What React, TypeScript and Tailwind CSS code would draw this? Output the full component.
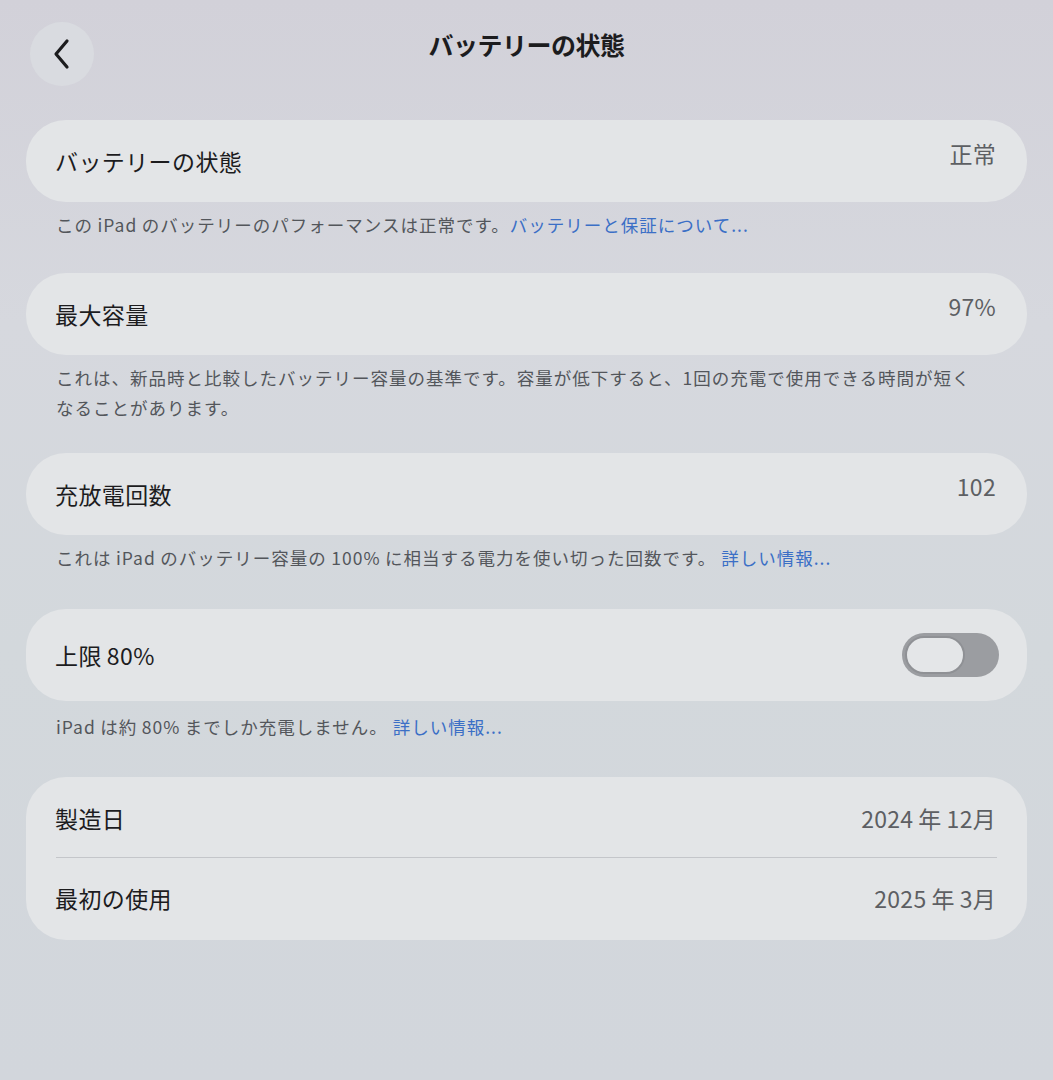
import React from 'react';

const font = { fontFamily: '"Noto Sans CJK JP", "Noto Sans", sans-serif' };

const Card: React.FC<{ className?: string; children: React.ReactNode }> = ({ className = '', children }) => (
  <div className={`mx-[26px] rounded-[40px] bg-[#e3e5e7] ${className}`}>{children}</div>
);

const Row: React.FC<{ label: string; value?: React.ReactNode; h?: string }> = ({ label, value, h = 'h-[82px]' }) => (
  <div className={`flex items-center justify-between pl-[29px] pr-[31px] ${h}`}>
    <span className="text-[23px] text-[#1c1c1e] tracking-[0.4px]">{label}</span>
    {value}
  </div>
);

const Value: React.FC<{ children: React.ReactNode; up?: boolean }> = ({ children, up = true }) => (
  <span className={`text-[23px] text-[#5d5f63] tracking-[0.3px] ${up ? '-mt-[16px]' : ''}`}>{children}</span>
);

const Note: React.FC<{ children: React.ReactNode; className?: string }> = ({ children, className = '' }) => (
  <p className={`pl-[56px] pr-[30px] text-[17.5px] leading-[30px] text-[#53565b] tracking-[1px] ${className}`}>{children}</p>
);

const Link: React.FC<{ children: React.ReactNode }> = ({ children }) => (
  <span className="text-[#3b6fc6]">{children}</span>
);

const Toggle: React.FC = () => (
  <div className="mr-[-3px] flex h-[44px] w-[97px] items-center rounded-full bg-[#9b9da1] p-[3px]">
    <div className="h-[38px] w-[60px] rounded-full border-2 border-[#8f9195] bg-[#e4e6e8]" />
  </div>
);

export default function App() {
  return (
    <div
      className="h-[1080px] w-[1053px] overflow-hidden bg-[linear-gradient(180deg,#d2d1d9_0%,#d6d8de_30%,#d3d8dc_60%,#d2d6dc_100%)]"
      style={font}
    >
      <header className="relative flex h-[112px] items-start justify-center pt-[26px]">
        <button className="absolute left-[30px] top-[22px] flex h-[64px] w-[64px] items-center justify-center rounded-full bg-[#d9dbe0]">
          <svg width="22" height="32" viewBox="0 0 22 32" fill="none">
            <path d="M16 3 L5 16 L16 29" stroke="#1c1c1e" strokeWidth="3.2" strokeLinecap="round" strokeLinejoin="round" />
          </svg>
        </button>
        <h1 className="text-[25px] font-semibold text-[#1c1c1e] tracking-[-0.5px]">バッテリーの状態</h1>
      </header>

      <div className="mt-[8px]">
        <Card>
          <Row label="バッテリーの状態" value={<Value>正常</Value>} />
        </Card>
        <Note className="mt-[8px]">
          この{'\u2009'}iPad{'\u2009'}のバッテリーのパフォーマンスは正常です。<Link>バッテリーと保証について...</Link>
        </Note>
      </div>

      <div className="mt-[33px]">
        <Card>
          <Row label="最大容量" value={<Value>97%</Value>} />
        </Card>
        <Note className="mt-[8px]">
          これは、新品時と比較したバッテリー容量の基準です。容量が低下すると、1回の充電で使用できる時間が短く
          <br />
          なることがあります。
        </Note>
      </div>

      <div className="mt-[30px]">
        <Card>
          <Row label="充放電回数" value={<Value>102</Value>} />
        </Card>
        <Note className="mt-[8px]">
          これは{'\u2009'}iPad{'\u2009'}のバッテリー容量の{'\u2009'}100%{'\u2009'}に相当する電力を使い切った回数です。 <Link>詳しい情報...</Link>
        </Note>
      </div>

      <div className="mt-[36px]">
        <Card>
          <Row label={'上限\u200980%'} h="h-[92px]" value={<Toggle />} />
        </Card>
        <Note className="mt-[11px]">
          iPad{'\u2009'}は約{'\u2009'}80%{'\u2009'}までしか充電しません。 <Link>詳しい情報...</Link>
        </Note>
      </div>

      <div className="mt-[35px]">
        <Card className="py-[2px]">
          <Row label="製造日" h="h-[78px]" value={<Value up={false}>2024{'\u2009'}年{'\u2009'}12月</Value>} />
          <div className="mx-[30px] h-px bg-[#c4c6ca]" />
          <Row label="最初の使用" h="h-[80px]" value={<Value up={false}>2025{'\u2009'}年{'\u2009'}3月</Value>} />
        </Card>
      </div>
    </div>
  );
}
